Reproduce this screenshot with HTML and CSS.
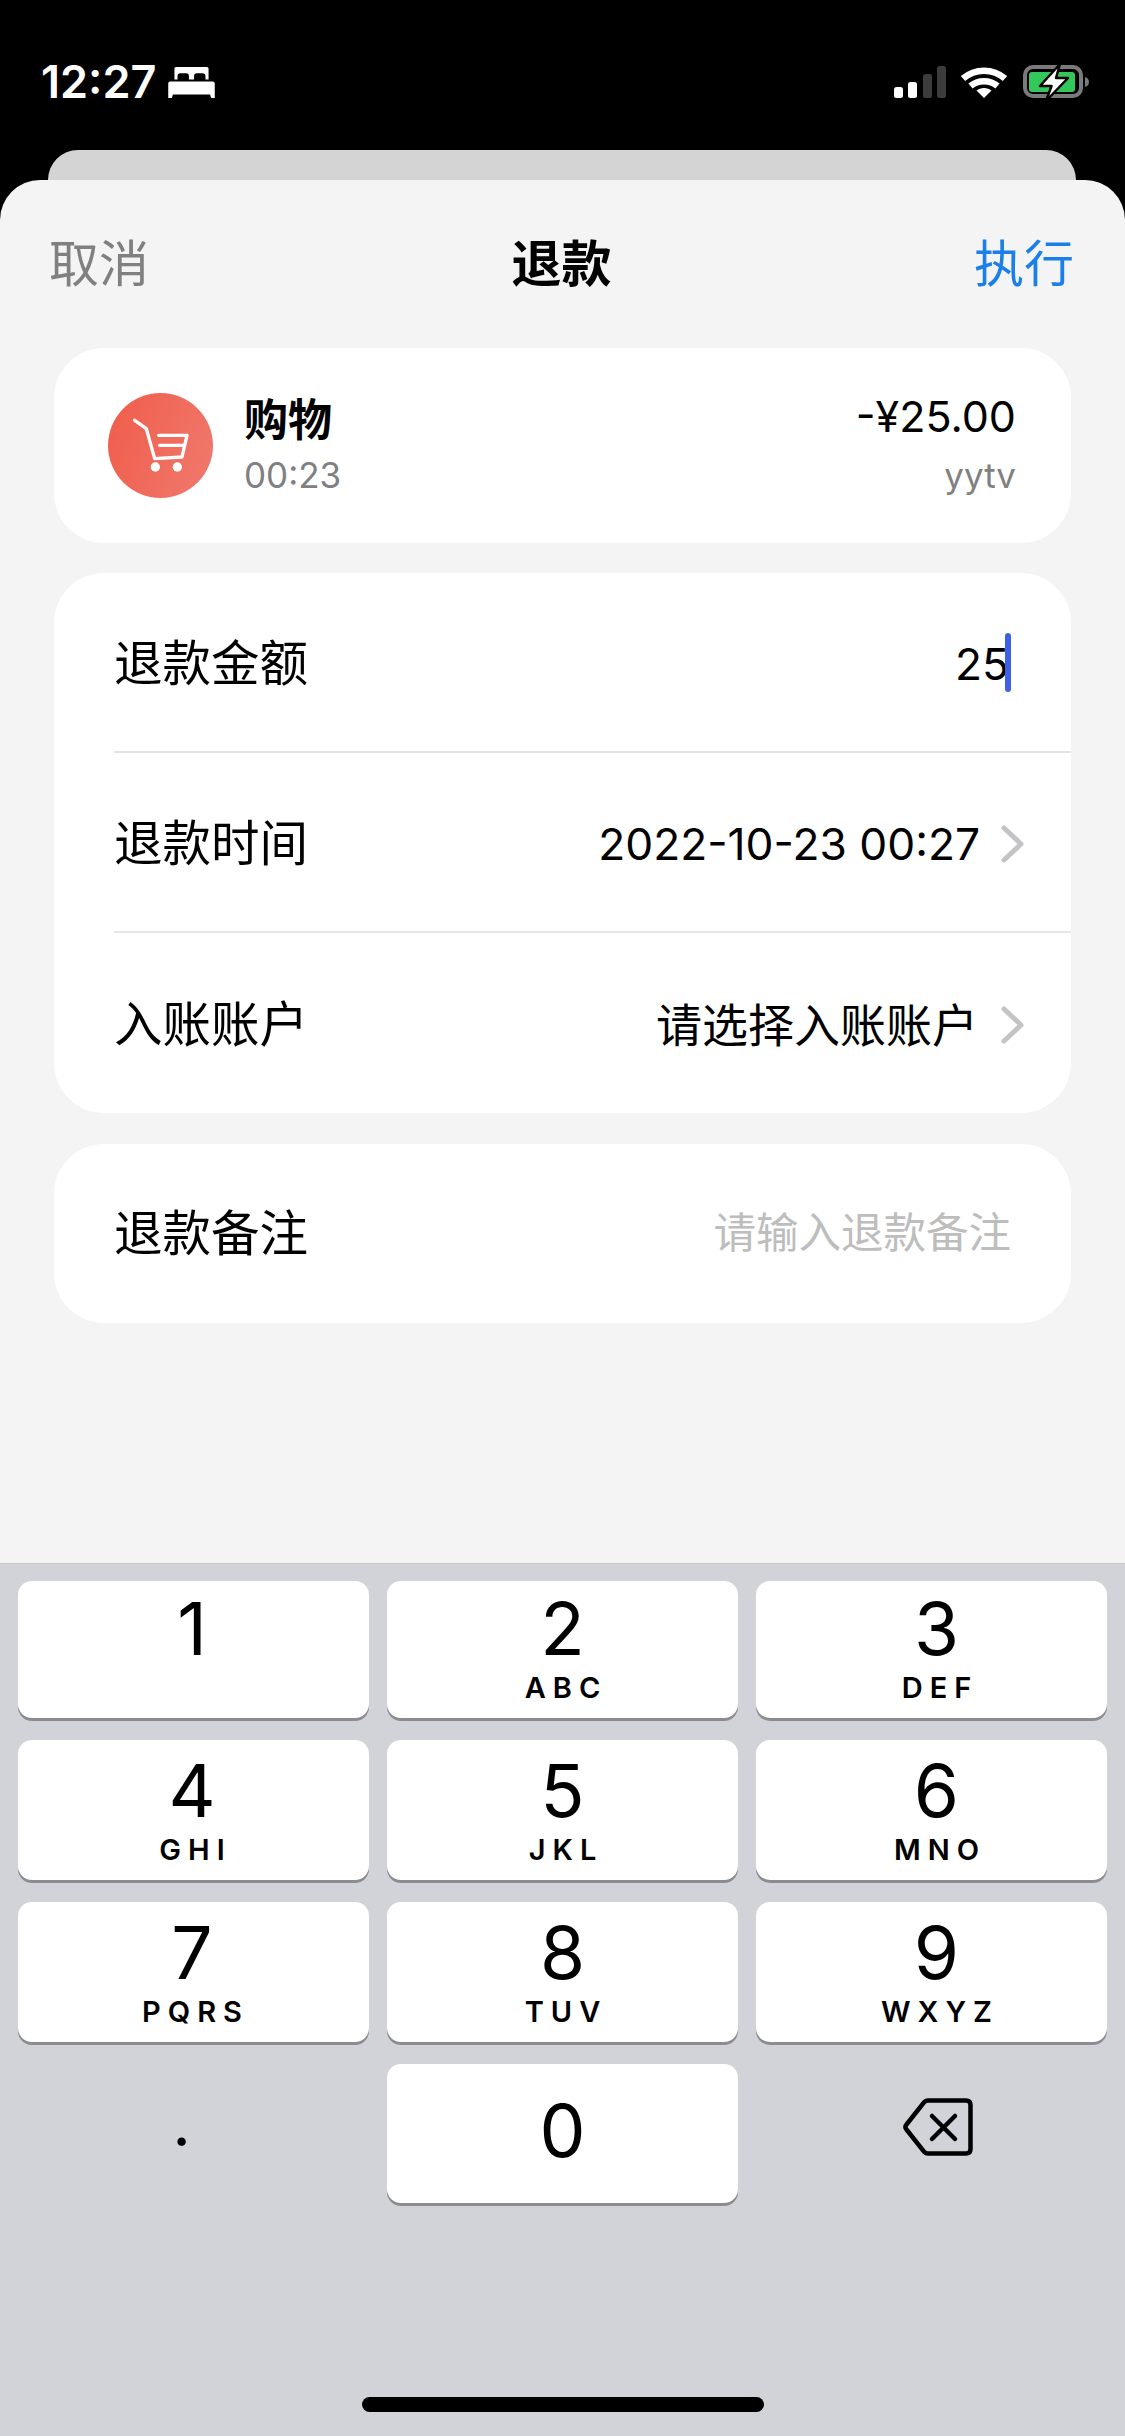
FILE: index.html
```html
<!DOCTYPE html>
<html lang="zh">
<head>
<meta charset="utf-8">
<title>退款</title>
<link rel="stylesheet" href="styles.css">
</head>
<body>
<div class="screen">
  <div class="status">
    <div class="status-left">
      <span class="time">12:27</span>
      <svg class="bed" viewBox="0 0 45 30"><path fill="#fff" d="M6 1.500C6 .5 7 0 8 0h29c1 0 2 .5 2 1.500V12h-3V8.500c0-1.500-1-2.500-2.500-2.500h-6C26 6 25 7 25 8.500V12h-5V8.500C20 7 19 6 17.500 6h-6C10 6 9 7 9 8.500V12H6zM2 14h41c1.200 0 2 .8 2 2v14h-3.500l-1-3.500h-36l-1 3.500H0V16c0-1.200.8-2 2-2z"/></svg>
    </div>
    <svg class="status-right" viewBox="0 0 200 34">
      <rect x="0" y="22" width="9" height="11" rx="2.500" fill="#fff"/>
      <rect x="14" y="17" width="9" height="16" rx="2.500" fill="#fff"/>
      <rect x="29" y="9" width="9" height="24" rx="2.500" fill="#3c3c3c"/>
      <rect x="43" y="1" width="9" height="32" rx="2.500" fill="#3c3c3c"/>
      <g fill="none" stroke="#fff" stroke-width="6.500">
        <path d="M69 13.500C81 3 99 3 111 13.500"/>
        <path d="M76.500 21C84 14.500 96 14.500 103.500 21"/>
      </g>
      <path fill="#fff" d="M90 33l-7.500-7.500c4-3.500 11-3.500 15 0z"/>
      <rect x="131" y="2" width="56" height="29" rx="8" fill="none" stroke="#7a7a7a" stroke-width="4"/>
      <rect x="135" y="7" width="46" height="20" rx="3" fill="#34c759"/>
      <path fill="#7a7a7a" d="M191 12c2.500.6 4 2.500 4 5s-1.500 4.400-4 5z"/>
      <path fill="#fff" stroke="#000" stroke-width="2.500" stroke-linejoin="round" d="M166-1L146 21h11.500L152 36l22-23h-12z"/>
    </svg>
  </div>
  <div class="peek"></div>
  <main class="sheet">
    <header class="nav">
      <span class="cancel">取消</span>
      <span class="title">退款</span>
      <span class="run">执行</span>
    </header>
    <section class="card summary">
      <div class="cat">
        <svg viewBox="0 0 315 315">
          <path fill="none" stroke="#fff" stroke-width="10" stroke-linecap="round" stroke-linejoin="round" d="M80 82l35 25 25 90 82-5 15-65h-85M155 157h73"/>
          <circle cx="142" cy="222" r="14" fill="#fff"/>
          <circle cx="208" cy="222" r="14" fill="#fff"/>
        </svg>
      </div>
      <div class="sum-left">
        <div class="sum-name">购物</div>
        <div class="sub">00:23</div>
      </div>
      <div class="sum-right">
        <div class="sum-amount">-¥25.00</div>
        <div class="sub">yytv</div>
      </div>
    </section>
    <section class="card form">
      <div class="row">
        <span class="label">退款金额</span>
        <span class="value typed">25<i class="caret"></i></span>
      </div>
      <div class="row">
        <span class="label">退款时间</span>
        <span class="value">2022-10-23 00:27</span>
        <svg class="chev" viewBox="0 0 26 40"><path d="M4 4l17 16L4 36" fill="none" stroke="#c4c4c6" stroke-width="5" stroke-linecap="round" stroke-linejoin="round"/></svg>
      </div>
      <div class="row">
        <span class="label">入账账户</span>
        <span class="value cjk">请选择入账账户</span>
        <svg class="chev" viewBox="0 0 26 40"><path d="M4 4l17 16L4 36" fill="none" stroke="#c4c4c6" stroke-width="5" stroke-linecap="round" stroke-linejoin="round"/></svg>
      </div>
    </section>
    <section class="card form">
      <div class="row note">
        <span class="label">退款备注</span>
        <span class="placeholder">请输入退款备注</span>
      </div>
    </section>
  </main>
  <div class="keyboard">
    <div class="keys">
      <div class="key"><span class="digit">1</span><span class="letters"></span></div>
      <div class="key"><span class="digit">2</span><span class="letters">ABC</span></div>
      <div class="key"><span class="digit">3</span><span class="letters">DEF</span></div>
      <div class="key"><span class="digit">4</span><span class="letters">GHI</span></div>
      <div class="key"><span class="digit">5</span><span class="letters">JKL</span></div>
      <div class="key"><span class="digit">6</span><span class="letters">MNO</span></div>
      <div class="key"><span class="digit">7</span><span class="letters">PQRS</span></div>
      <div class="key"><span class="digit">8</span><span class="letters">TUV</span></div>
      <div class="key"><span class="digit">9</span><span class="letters">WXYZ</span></div>
      <div class="key flat"><span class="dot">.</span></div>
      <div class="key zero"><span class="digit">0</span></div>
      <div class="key flat">
        <svg class="back" viewBox="0 0 70 58"><path fill="none" stroke="#000" stroke-width="4.500" stroke-linejoin="round" d="M25 2.500h38c2.800 0 4.500 1.700 4.500 4.500v44c0 2.800-1.700 4.500-4.500 4.500H25c-1.500 0-2.800-.6-3.800-1.600L3.500 31.500c-1.300-1.500-1.300-3.500 0-5L21.200 4.100c1-1 2.300-1.600 3.800-1.600z"/><path fill="none" stroke="#000" stroke-width="4.500" stroke-linecap="round" d="M29 18l23 23M52 18L29 41"/></svg>
      </div>
    </div>
    <div class="home"></div>
  </div>
</div>
</body>
</html>
```
FILE: styles.css
```css
* { box-sizing: border-box; }
html, body { margin: 0; padding: 0; }
body {
  width: 1125px;
  height: 2436px;
  overflow: hidden;
  background: #000;
  font-family: Inter, "Noto Sans CJK SC", sans-serif;
  color: #000;
}
.screen { display: flex; flex-direction: column; height: 2436px; background: #000; }

.status {
  height: 150px;
  padding: 65px 31px 0 41px;
  display: flex;
  justify-content: space-between;
  align-items: flex-start;
}
.status-left { display: flex; align-items: center; gap: 12px; }
.time { color: #fff; font-size: 45px; font-weight: 600; line-height: 34px; }
.bed { width: 47px; height: 31px; }
.status-right { width: 200px; height: 34px; overflow: visible; }

.peek {
  height: 30px;
  margin: 0 49px 0 48px;
  background: #d4d4d4;
  border-radius: 30px 30px 0 0;
}
.sheet {
  height: 1383px;
  background: #f4f4f4;
  border-radius: 40px 40px 0 0;
  padding: 0 54px;
  display: flex;
  flex-direction: column;
}
.nav {
  height: 168px;
  margin: 0 -3px 0 -5px;
  display: flex;
  justify-content: space-between;
  align-items: center;
  font-size: 50px;
  line-height: 60px;
}
.cancel { color: #808080; }
.title { font-weight: 700; }
.run { color: #1a7fe8; }

.card { background: #fff; border-radius: 50px; margin-bottom: 31px; }
.summary {
  height: 195px;
  margin-bottom: 30px;
  padding: 0 55px;
  display: flex;
  align-items: center;
}
.cat {
  width: 105px;
  height: 105px;
  border-radius: 50%;
  background: linear-gradient(110deg, #f05c4a, #f07a6e);
  margin-left: -1px;
  margin-right: 31px;
}
.cat svg { display: block; width: 105px; height: 105px; }
.sum-left { flex: 1; }
.sum-name { font-size: 44px; line-height: 56px; font-weight: 700; margin-top: -3px; }
.sub { font-size: 35px; line-height: 44px; color: #808080; margin-top: 5px; }
.sum-right { text-align: right; margin-top: -3px; }
.sum-amount { font-size: 43px; line-height: 56px; margin-top: -3px; }
.sum-right .sub { margin-top: 9px; }

.row {
  height: 180px;
  margin-left: 60px;
  padding: 3px 60px 0 0;
  display: flex;
  align-items: center;
  border-bottom: 2px solid #e6e6e6;
  font-size: 48.5px;
}
.row:last-child { border-bottom: 0; }
.row.note { height: 179px; padding-top: 0; }
.label { flex: 1; line-height: 60px; }
.value { font-size: 44.3px; line-height: 60px; }
.value.cjk { font-size: 46px; padding-right: 2px; }
.typed { position: relative; padding-right: 2px; }
.caret {
  position: absolute;
  right: 0;
  top: -1px;
  width: 6px;
  height: 59px;
  border-radius: 3px;
  background: #3f5fe6;
}
.chev { width: 26px; height: 40px; margin: 0 -15px 0 20px; }
.placeholder { font-size: 42.5px; color: #bdbdbd; margin-top: -9px; }

.keyboard {
  height: 873px;
  background: #d1d3d9;
  border-top: 1px solid #c6c8cd;
  padding: 17px 18px 0;
  display: flex;
  flex-direction: column;
}
.keys {
  display: grid;
  grid-template-columns: 351px 351px 351px;
  grid-template-rows: 137px 140px 140px 139px;
  column-gap: 18px;
  row-gap: 22px;
}
.key {
  background: #fff;
  border-radius: 14px;
  box-shadow: 0 3px 0 #8b8b90;
  display: flex;
  flex-direction: column;
  align-items: center;
  padding-top: 11px;
}
.key:first-child { padding-top: 8px; }
.key:nth-child(2), .key:nth-child(3) { padding-top: 8px; }
.key:nth-child(3n+1) { padding-right: 3px; }
.key:nth-child(3n) { padding-left: 10px; }
.key.flat { background: none; box-shadow: none; justify-content: center; padding: 0; }
.key.zero { justify-content: center; padding: 0 0 5px; }
.digit { font-size: 73px; line-height: 80px; }
.letters { font-size: 29px; line-height: 34px; font-weight: 600; letter-spacing: 7px; margin-top: 2px; margin-right: -7px; height: 34px; }
.dot { font-size: 50px; line-height: 50px; font-weight: 700; margin-top: -12px; margin-right: 24px; }
.back { width: 70px; height: 58px; margin-left: 8px; margin-right: -4px; margin-top: -14px; }
.home {
  width: 402px;
  height: 15px;
  border-radius: 8px;
  background: #000;
  margin: auto auto 24px;
}
```
